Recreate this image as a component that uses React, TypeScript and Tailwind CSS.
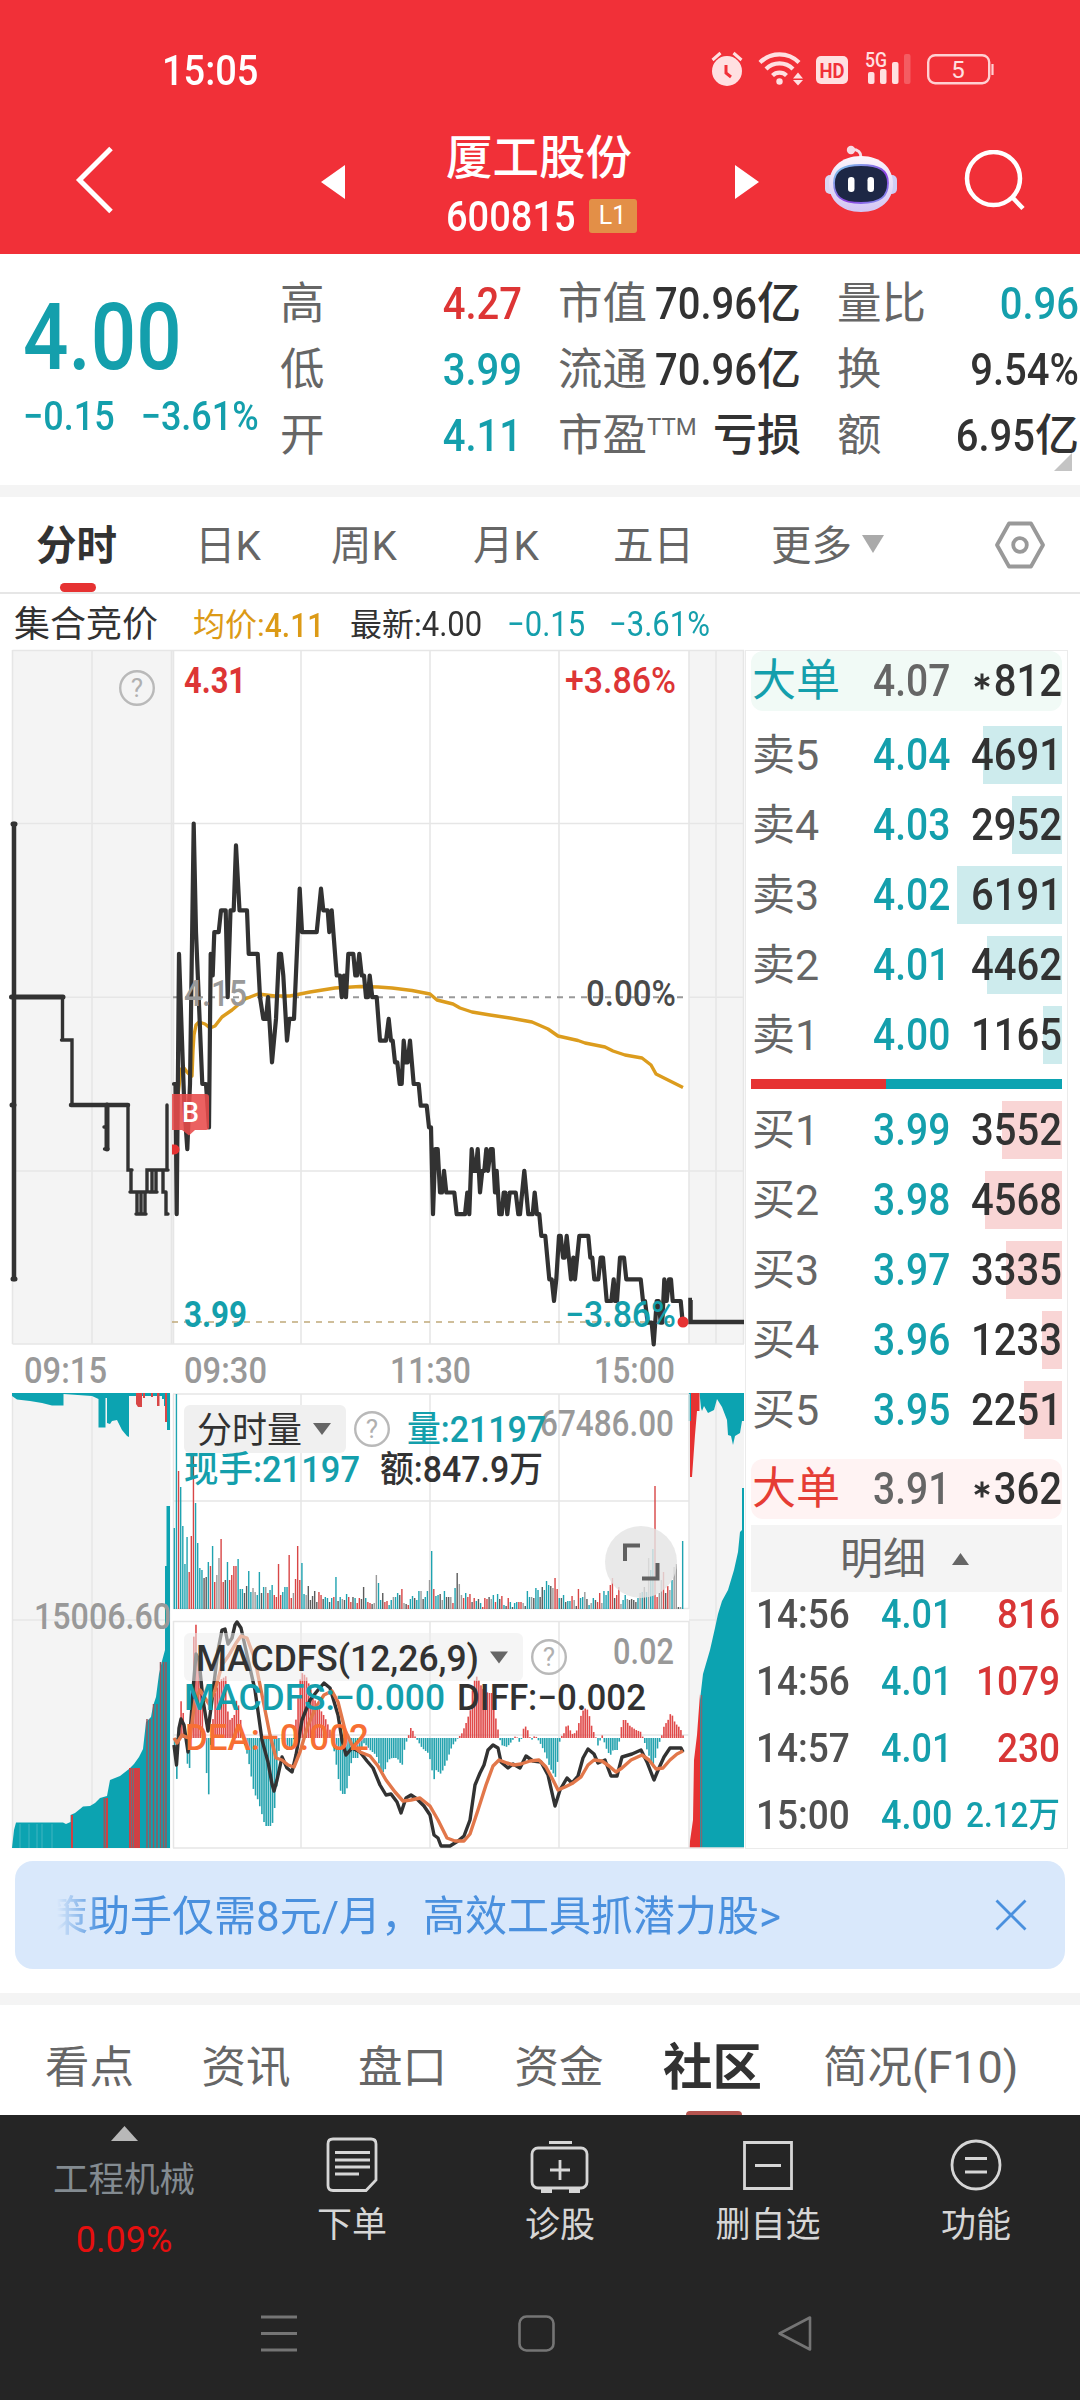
import React from 'react';
import clsx from 'clsx';

const UP = '#e63232';
const DOWN = '#0ca3b1';
const INK = '#323232';
const GRID = '#e6e6e6';

type Point = [number, number];

/* ---------- chart data ---------- */

// x position, offset from the previous close in cents
const priceLine: Point[] = [
  [174, -4], [175.5, -4], [176.7, -10], [179, 2], [182, -2], [184.3, -5], [187.3, -7], [190, -4], [193.7, 8], [196, 3],
  [202.3, -4], [206, -4], [209, -6], [210.7, 2], [212.7, 1], [214.3, 3], [218.7, 3], [221, 4], [225.7, 4],
  [227.7, 0], [230.5, 4], [233.7, 4], [236, 7], [239.5, 4], [247, 4], [248.7, 2], [257.7, 2], [260, 0],
  [263.3, -1], [266, -1], [268, 0], [272, -3], [276, -1], [279, 2], [281, 2], [283.3, 1], [287, -2],
  [289.3, -1], [294, -1], [299.7, 5], [302, 3], [316.7, 3], [321, 5], [323.3, 4], [327.7, 4], [329.3, 3],
  [331.7, 4], [336.7, 1], [340, 1], [341.7, 0], [344, 1], [346, 0], [348.3, 2], [353.3, 2], [355.3, 1],
  [357, 1], [359.3, 2], [361.7, 1], [364, 1], [366, 0], [368, 0], [369.7, 1], [372.3, 0], [376.7, 0],
  [380, -2], [386, -2], [388.7, -1], [391, -2], [392.7, -2], [395, -3], [397.3, -3], [399.7, -4],
  [401.7, -4], [403.7, -2], [406, -3], [407.7, -3], [410, -2], [413.7, -4], [418.7, -4], [420.7, -5],
  [426.7, -5], [429, -6], [431, -6], [433, -10], [435.3, -7], [437.7, -7], [440, -9], [442, -9], [444, -8],
  [446.3, -9], [454.3, -9], [456.7, -10], [465, -10], [467.3, -9], [469.3, -10], [471.7, -7], [474, -8],
  [475.7, -8], [477.7, -7], [480, -9], [482.3, -8], [484.3, -8], [486.3, -7], [488, -8], [490.7, -7],
  [492.7, -7], [495, -9], [496.7, -8], [499.3, -10], [501.7, -10], [503.7, -9], [505.3, -9], [507.3, -10],
  [509.7, -9], [515.7, -9], [518.3, -10], [520, -10], [524.3, -8], [528.3, -10], [532.7, -10], [534.7, -9],
  [537, -10], [539.3, -10], [541.3, -11], [545.3, -11], [549.3, -13], [551.7, -13], [554, -14], [556.3, -13],
  [559, -11], [560.7, -11], [563, -12], [564.7, -12], [566.7, -11], [571, -13], [573.3, -12], [575, -13],
  [579.3, -11], [588.3, -11], [590.3, -12], [592.3, -12], [594.3, -13], [598.3, -13], [600.7, -12],
  [603, -12], [606.7, -14], [611.3, -14], [613.7, -13], [615, -14], [617, -14], [620, -12], [624, -12],
  [626.3, -13], [640.7, -13], [643, -14], [645, -14], [647.7, -15], [651.7, -15], [653.7, -16],
  [656.7, -14], [658.7, -14], [660.7, -15], [662.3, -15], [664.3, -13], [666.7, -14], [669, -13], [671, -13],
  [672.7, -14], [680.7, -14], [682.7, -15],
];

const avgLine: Point[] = [
  [178, 1095], [181, 1069], [184, 1068], [187, 1072], [190, 1075], [192, 1076], [193, 1050], [194, 1035], [196, 1025], [199, 1022],
  [205, 1024], [210, 1028], [215, 1026], [222, 1017], [232, 1010], [245, 999], [258, 994], [275, 996],
  [290, 996], [310, 992], [335, 988], [360, 986.5], [378, 987], [392, 988], [412, 990.5], [430, 994],
  [437, 1000], [453, 1004], [460, 1008], [472, 1012], [490, 1015], [510, 1018], [532, 1022], [548, 1029],
  [558, 1036], [578, 1040.5], [585, 1043], [605, 1047], [613, 1051], [625, 1055], [642, 1058], [651, 1065],
  [656, 1074], [668, 1080], [676, 1084], [683, 1087.5],
];

// bar height + colour: r rise, t fall, g/k flat
const volumes = (
  '81t 215t 138r 122t 83t 45t 72t 37r 73r 168r 106t 66t 41t 39t 31k 32k 47t 43r 63t 27r 34g 51g 70r 27r 29k 47t 29r 34r 43r 43r 50t ' +
  '20t 20t 16k 23k 38t 17t 21g 17g 14t 37t 16k 22t 22g 16r 19t 24t 14r 12r 45r 14r 17t 22t 22t 54r 11r 16g 30r 63r 29r 46t 15t 14g ' +
  '23k 9k 13k 18k 7k 17r 14r 10k 12t 11t 7k 11t 12r 32t 8k 12t 10g 9k 15t 12r 7r 12k 11t 6r 11r 10k 22k 11t 7r 6r 5k 6g 34g 26t ' +
  '9t 16k 7r 8r 4t 9t 12g 12t 16t 14k 20r 6g 5k 4r 10t 13t 11k 9t 18t 18g 10k 12t 18t 29g 58t 20r 13t 14t 15k 9g 18t 12k 12k 12g ' +
  '6r 21t 36k 25g 14g 11r 16t 12r 15r 7k 11r 8t 10k 6t 2r 11r 10r 12k 10g 14t 7r 15t 10k 13r 4t 3k 11r 7t 2k 6t 7t 7r 7r 6g 3k ' +
  '18t 12t 12g 11k 21t 19t 12k 22k 19t 28t 24t 23k 21g 31r 20r 11t 11k 14t 7k 8t 8t 13r 9g 3k 20r 11t 12t 17g 10k 4t 6g 11t 9k 7r ' +
  '16r 6g 18t 14t 18t 24r 31r 11k 14r 22r 5g 9t 14t 10g 9k 10k 9k 7k 11t 16g 17t 22k 17t 51g 39t 60t 123r 12r 16g 29g 37r 16k 23r ' +
  '19g 29t 42g 45g 2k 2g 68t'
).split(' ');

const barColors: Record<string, string> = { r: '#d84646', t: '#1fa3b0', g: '#9a9a9a', k: '#5c5c5c' };

const macdBars: Point[] = [
  [174, 0], [176.5, -46], [179, 10], [181, 37], [184, 20], [187, -25], [189.5, -30], [191, 0], [193.5, 100], [196, 114],
  [198, 80], [201, 50], [204, 10], [206, -30], [208.7, -57], [210.5, -10], [212, 8], [215, 45], [220, 58],
  [226, 62], [228, 22], [230, 18], [234, 22], [237, 42], [240, 22], [243, 0], [248, -20], [254, -55],
  [258, -62], [265, -88], [272, -88], [276, -60], [279, -10], [281, 0], [282.5, 9], [284, 0], [286, -12],
  [291, -12], [294, 0], [297, 30], [299, 55], [302, 65], [306, 62], [312, 45], [318, 30], [322, 26],
  [326, 18], [330, 8], [332, 0], [336, -25], [340, -52], [344, -58], [347, -50], [352, -20], [358, -20],
  [364, -5], [370, -12], [376, -17], [381, -32], [384, -35], [388, -22], [392, -20], [397, -20], [402, -28],
  [405, -7], [408, 0], [410, 10], [412, 10], [414, 3], [416, 0], [422, -10], [428, -15], [431, -25],
  [433.5, -44], [436, -32], [441, -36], [446, -25], [452, -8], [458, 0], [462, 5], [466, 15], [471, 30],
  [473, 55], [477, 62], [482, 50], [488, 45], [492, 45], [496, 18], [499, 3], [501, -7], [507, -9],
  [512, -3], [516, 3], [519, -4], [522, 0], [524, 13], [527, 10], [531, -3], [535, 3], [540, -5],
  [545, -15], [550, -30], [556, -40], [558, -18], [560, 0], [564, 5], [567, 15], [570, 8], [573, 3],
  [577, 8], [580, 20], [584, 30], [588, 28], [592, 10], [596, 0], [598, -8], [602, 3], [606, -10],
  [610, -18], [613, -12], [618, -12], [621, 10], [624, 20], [630, 12], [636, 8], [641, 6], [643, 0],
  [648, -15], [653, -30], [658, -8], [661, 0], [664, 12], [668, 18], [671, 26], [675, 15], [680, 10], [684, 0],
];

const diffLine: Point[] = [
  [174, 1745], [176.5, 1765], [179, 1728], [181, 1719], [184, 1725], [188, 1752], [190, 1735], [193, 1690],
  [196, 1654], [199, 1660], [203, 1700], [208, 1731], [212, 1700], [218, 1650], [222, 1630], [225, 1629],
  [228, 1644], [232, 1638], [235, 1625], [237, 1622], [241, 1628], [247, 1655], [255, 1690], [262, 1740], [268, 1762],
  [272, 1784], [274, 1791], [277, 1780], [282, 1757], [287, 1768], [292, 1772], [296, 1755], [302, 1720], [310, 1700],
  [318, 1690], [324, 1683], [330, 1688], [338, 1715], [342, 1740], [346, 1755], [352, 1748], [360, 1752],
  [367, 1761], [373, 1768], [380, 1785], [386, 1795], [391, 1794], [397, 1802], [401, 1813], [406, 1798],
  [411, 1795], [417, 1799], [424, 1806], [430, 1815], [434, 1835], [438, 1838], [441, 1846], [450, 1846],
  [458, 1841], [464, 1836], [470, 1820], [475, 1785], [480, 1773], [484, 1765], [488, 1750], [493, 1745],
  [498, 1748], [501, 1762], [508, 1768], [513, 1764], [520, 1768], [526, 1756], [533, 1761], [541, 1762],
  [548, 1775], [555, 1806], [560, 1790], [567, 1778], [572, 1783], [578, 1776], [583, 1758], [588, 1749],
  [594, 1754], [598, 1763], [605, 1760], [611, 1776], [617, 1776], [622, 1757], [632, 1754], [641, 1750],
  [647, 1762], [654, 1780], [659, 1768], [664, 1757], [670, 1748], [681, 1748], [683, 1752],
];

const deaLine: Point[] = [
  [174, 1738], [177, 1743], [182, 1735], [186, 1737], [190, 1738], [195, 1700], [200, 1690], [205, 1698],
  [209, 1704], [215, 1690], [222, 1665], [229, 1655], [236, 1643], [241, 1636], [247, 1638], [255, 1660],
  [263, 1700], [270, 1735], [276, 1758], [282, 1760], [288, 1765], [294, 1767], [300, 1752], [308, 1725],
  [316, 1707], [324, 1695], [332, 1691], [338, 1702], [345, 1730], [352, 1745], [360, 1752], [370, 1756],
  [378, 1766], [386, 1780], [395, 1792], [403, 1801], [411, 1800], [420, 1798], [430, 1806], [438, 1820],
  [447, 1838], [455, 1841], [464, 1841], [470, 1834], [478, 1810], [486, 1785], [493, 1766], [499, 1760],
  [507, 1763], [514, 1765], [521, 1764], [530, 1761], [539, 1760], [546, 1767], [553, 1780], [558, 1790],
  [565, 1787], [573, 1783], [581, 1777], [588, 1765], [594, 1760], [602, 1761], [609, 1766], [616, 1772],
  [622, 1768], [631, 1760], [642, 1755], [649, 1760], [656, 1769], [663, 1768], [670, 1760], [677, 1754],
  [683, 1751],
];

const valueAt = (points: Point[], x: number) => {
  const i = points.findIndex((p) => p[0] >= x);
  if (i <= 0) return 0;
  const [x0, y0] = points[i - 1];
  const [x1, y1] = points[i];
  return y0 + ((y1 - y0) * (x - x0)) / (x1 - x0);
};

const toPoints = (points: Point[]) => points.map((p) => p.join(',')).join(' ');
const priceY = (cents: number) => 997.2 - cents * 21.7;

/* ---------- small parts ---------- */

// DIN-like figures: Roboto stretched a little upwards
function Num({ children, className }: { children: React.ReactNode; className?: string }) {
  return <span className={clsx('inline-block scale-y-[1.12] font-medium', className)}>{children}</span>;
}

interface LabelProps {
  x: number;
  y: number;
  w: number;
  size?: number;
  fill?: string;
  weight?: number;
  children: string;
}

function Label({ x, y, w, size = 36, fill = INK, weight = 500, children }: LabelProps) {
  return (
    <text x={x} y={y} textLength={w} lengthAdjust="spacingAndGlyphs" fontSize={size} fill={fill} fontWeight={weight}>
      {children}
    </text>
  );
}

function Help({ x, y }: { x: number; y: number }) {
  return (
    <g>
      <circle cx={x} cy={y} r="16.8" fill="none" stroke="#b9b9b9" strokeWidth="2.4" />
      <text x={x} y={y + 9} textAnchor="middle" fontSize="26" fill="#b0b0b0">?</text>
    </g>
  );
}

/* ---------- header ---------- */

function StatusIcons() {
  return (
    <svg width="290" height="48" viewBox="708 46 290 48" fill="#ffe0e1">
      <circle cx="727" cy="71" r="15" />
      <path d="M712.5 60l8-7M741.5 60l-8-7" stroke="#ffe0e1" strokeWidth="3" />
      <path d="M726 65v8l5 4" fill="none" stroke="#f13038" strokeWidth="3" />
      <g fill="none" stroke="#ffe0e1" strokeWidth="4.2">
        <path d="M760 62.5a27.5 27.5 0 0 1 39 0" />
        <path d="M766 69a19 19 0 0 1 27 0" />
        <path d="M772.5 75.5a10 10 0 0 1 14 0" />
      </g>
      <circle cx="779.5" cy="81.5" r="3.2" />
      <path d="M793 78.5l5-6 5 6zM793 80l5 5.5 5-5.5z" />
      <rect x="816" y="56" width="32" height="28" rx="5" />
      <text x="832" y="77.5" textAnchor="middle" fontSize="21" fontWeight="700" fill="#f13038" textLength="25" lengthAdjust="spacingAndGlyphs">HD</text>
      <text x="865" y="67" fontSize="20" fontWeight="500" textLength="22" lengthAdjust="spacingAndGlyphs">5G</text>
      <rect x="868" y="72" width="6.5" height="12" rx="2" />
      <rect x="880" y="69" width="6.5" height="15" rx="2" />
      <rect x="892" y="62" width="6.5" height="22" rx="2" />
      <rect x="904" y="54" width="6.5" height="30" rx="2" opacity=".25" />
      <rect x="928.2" y="55.2" width="61" height="28" rx="7" fill="none" stroke="#ffd0d2" strokeWidth="2.4" />
      <path d="M992.5 64v11" stroke="#ffd0d2" strokeWidth="2.2" />
      <text x="958" y="78" textAnchor="middle" fontSize="24">5</text>
    </svg>
  );
}

function Robot() {
  return (
    <svg width="74" height="70" viewBox="824 144 74 70">
      <defs>
        <linearGradient id="shell" x1="0" y1="0" x2="0" y2="1">
          <stop offset="0" stopColor="#fdf6fb" />
          <stop offset="1" stopColor="#d2c5f4" />
        </linearGradient>
        <linearGradient id="rim" x1="0" y1="0" x2="1" y2="1">
          <stop offset="0" stopColor="#7fd4ee" />
          <stop offset=".6" stopColor="#8d3fe0" />
          <stop offset="1" stopColor="#7fa0f0" />
        </linearGradient>
      </defs>
      <path d="M852 149.500c6 0 9 2 9 8" fill="none" stroke="#f6dfe8" strokeWidth="3" />
      <circle cx="851" cy="150" r="4.2" fill="#f6dbe4" />
      <rect x="825" y="175" width="12" height="19" rx="5" fill="#dbd6f2" />
      <rect x="885" y="175" width="12" height="19" rx="5" fill="#cfcdf5" />
      <path d="M861 156c20 0 32 12 32 28s-12 28-32 28-32-12-32-28 12-28 32-28z" fill="url(#shell)" />
      <path d="M861 165c18 0 27 5 27 18s-7 20-27 20-27-7-27-20 9-18 27-18z" fill="#1d2745" stroke="url(#rim)" strokeWidth="1.8" />
      <rect x="848" y="177" width="6.5" height="15" rx="3.2" fill="#fff" />
      <rect x="867.5" y="177" width="6.5" height="15" rx="3.2" fill="#fff" />
    </svg>
  );
}

function Header() {
  return (
    <header className="h-[254px] bg-[#f13038] text-white">
      <div className="flex h-[124px] items-start justify-between pl-[162px] pr-[82px] pt-[46px]">
        <span className="flex h-12 items-center text-[38px]">
          <Num className="scale-y-[1.08]">15:05</Num>
        </span>
        <StatusIcons />
      </div>
      <div className="flex h-[116px] items-center">
        <svg className="-mt-1 ml-[74px]" width="42" height="68" viewBox="74 148 42 68" fill="none" stroke="#fff" strokeWidth="5">
          <path d="M111 150.5L79.500 182l31.5 31.5" />
        </svg>
        <svg className="ml-[205px]" width="24" height="34" fill="#fff">
          <path d="M24 0v34L0 17z" />
        </svg>
        <div className="ml-[85px] w-[220px] pl-4 pt-2">
          <div className="text-[46.5px] font-medium leading-[60px]">厦工股份</div>
          <div className="-mt-px flex h-[58px] items-center gap-[13px] text-[38px]">
            <Num className="relative top-px">600815</Num>
            <span className="flex h-[34px] w-12 items-center justify-center rounded-[3px] bg-[#e38f47] text-[25px]">L1</span>
          </div>
        </div>
        <svg className="ml-[85px]" width="24" height="34" fill="#fff">
          <path d="M0 0v34l24-17z" />
        </svg>
        <div className="-mt-1.5 ml-[65px]">
          <Robot />
        </div>
        <svg className="ml-[65px]" width="64" height="64" viewBox="0 0 64 64" fill="none" stroke="#fff" strokeWidth="4.5">
          <circle cx="30.5" cy="28.5" r="26.5" />
          <path d="M49.5 47.5L60 58.5" />
        </svg>
      </div>
    </header>
  );
}

/* ---------- quote ---------- */

interface Quote {
  label: string;
  sup?: string;
  value: string;
  unit?: string;
  tone: string;
}

const quotes: Quote[] = [
  { label: '高', value: '4.27', tone: 'text-[#dd3535]' },
  { label: '市值', value: '70.96', unit: '亿', tone: 'text-[#323232]' },
  { label: '量比', value: '0.96', tone: 'text-[#149fac]' },
  { label: '低', value: '3.99', tone: 'text-[#149fac]' },
  { label: '流通', value: '70.96', unit: '亿', tone: 'text-[#323232]' },
  { label: '换', value: '9.54%', tone: 'text-[#323232]' },
  { label: '开', value: '4.11', tone: 'text-[#149fac]' },
  { label: '市盈', sup: 'TTM', value: '', unit: '亏损', tone: 'text-[#323232]' },
  { label: '额', value: '6.95', unit: '亿', tone: 'text-[#323232]' },
];

function QuotePanel() {
  return (
    <section className="relative flex h-[231px]">
      <div className="w-[280px] pl-[23px] text-[#149fac]">
        <div className="mt-[44px] flex h-20 items-center text-[80px]">
          <Num className="scale-y-[1.15]">4.00</Num>
        </div>
        <div className="mt-[19px] flex h-10 items-center gap-[26px] whitespace-nowrap text-[36px]">
          <Num className="scale-y-[1.09] font-medium">−0.15</Num>
          <Num className="scale-y-[1.09] font-medium">−3.61%</Num>
        </div>
      </div>
      <div className="mt-[17px] grid h-[198px] w-[800px] grid-cols-[242px_243px_242px] grid-rows-3 gap-x-9">
        {quotes.map((q) => (
          <div key={q.label} className="flex items-center justify-between whitespace-nowrap leading-[60px]">
            <span className="flex text-[44.5px] text-[#666]">
              {q.label}
              {q.sup && <sup className="top-0 text-[24px] leading-[42px]">{q.sup}</sup>}
            </span>
            <span className={clsx('flex items-center text-[40px]', q.tone)}>
              {q.value && <Num>{q.value}</Num>}
              {q.unit && <span className="text-[44px] font-medium">{q.unit}</span>}
            </span>
          </div>
        ))}
      </div>
      <svg className="absolute right-2 top-[199px]" width="18" height="18" fill="#c4c4c4">
        <path d="M18 0v18H0z" />
      </svg>
    </section>
  );
}

function PeriodTabs() {
  return (
    <nav className="flex h-[97px] items-center border-b-2 border-[#e6e6e6] text-[40.5px] leading-[60px] text-[#666]">
      <div className="relative ml-[36px] flex h-full w-[84px] items-center pt-[3px] font-bold text-[#323232]">
        分时
        <span className="absolute bottom-0 left-6 h-[9px] w-9 rounded-full bg-[#e63232]" />
      </div>
      <div className="ml-[75px] w-[136px] pt-[3px]">日K</div>
      <div className="w-[142px] pt-[3px]">周K</div>
      <div className="w-[140px] pt-[3px]">月K</div>
      <div className="w-[158px] pt-[3px]">五日</div>
      <div className="flex items-center gap-2.5 pt-[3px]">
        更多
        <svg className="-mt-1" width="22" height="18" fill="#aaa">
          <path d="M0 0h22L11 18z" />
        </svg>
      </div>
      <svg className="ml-[110px]" width="52" height="50" viewBox="0 0 52 50" fill="none" stroke="#999" strokeWidth="3.8" strokeLinejoin="round">
        <path d="M15 3.5h22L49 25 37 46.5H15L3 25z" />
        <circle cx="26" cy="25" r="6.8" />
      </svg>
    </nav>
  );
}

function InfoRow() {
  return (
    <div className="flex h-14 items-center whitespace-nowrap pl-[14px] pt-1.5 text-[32px] text-[#323232]">
      <span className="w-[179px] text-[36px]">集合竞价</span>
      <span className="flex w-[157px] items-center text-[#dc9a16]">
        均价:<Num className="text-[30px]">4.11</Num>
      </span>
      <span className="flex w-[157px] items-center">
        最新:<Num className="text-[31px] font-normal">4.00</Num>
      </span>
      <Num className="w-[102px] text-[31px] font-normal text-[#149fac]">−0.15</Num>
      <Num className="text-[31px] font-normal text-[#149fac]">−3.61%</Num>
    </div>
  );
}

/* ---------- charts ---------- */

function PriceChart() {
  return (
    <g>
      <rect x="12.5" y="650" width="161" height="694" fill="#f4f4f4" />
      <rect x="689" y="650" width="55" height="694" fill="#f4f4f4" />
      <g stroke={GRID} strokeWidth="1.6">
        <path d="M12.5 650.5H744M12.5 823.5H744M12.5 997.2H173M689 997.2H744M12.5 1171H744M12.5 1344H744" />
        <path d="M12.5 650V1344M92 650V1344M171.5 650V1344M173.5 650V1344M301 650V1344M430 650V1344M559 650V1344M689 650V1344M716 650V1344M743.5 650V1344" />
      </g>
      <Help x={137} y={688} />
      <path d="M173 997.2H683" stroke="#999" strokeWidth="2" strokeDasharray="6 6" />
      <path d="M172 1322H676" stroke="#c0a97a" strokeWidth="1.6" strokeDasharray="6 6" />

      <polyline points={toPoints(avgLine)} fill="none" stroke="#dc9c1d" strokeWidth="3.4" strokeLinejoin="round" />
      <polyline
        points={toPoints(priceLine.map(([x, c]) => [x, priceY(c)]))}
        fill="none"
        stroke={INK}
        strokeWidth="4.2"
        strokeLinejoin="round"
        strokeLinecap="round"
      />

      {/* opening auction */}
      <g fill="none" stroke={INK} strokeWidth="3.4" strokeLinecap="round">
        <path d="M14 824V1279" strokeWidth="4.5" />
        <path d="M11.5 997H63M13 824H15M13 1279H15" strokeWidth="5" />
        <path d="M62.5 997V1040H72V1105M61.5 1040H72" />
        <path d="M71 1105H128" strokeWidth="4.5" />
        <path d="M12 1105H14M107 1105V1149" strokeWidth="5" />
        <path d="M104 1127H107M104.5 1149H108M128 1105V1170H132M131 1170V1192M130 1192H146M137 1192V1214M141 1192V1214M145 1192V1214M136 1214H146M147 1192V1170H168M152 1170V1192M156 1170V1192M149 1192H157M163 1170V1192H166M166 1192V1214H168M167 1170V1105" />
      </g>
      {/* closing auction */}
      <path d="M692 1300H690.5V1322H744" fill="none" stroke={INK} strokeWidth="4.5" />

      <circle cx="683" cy="1322" r="5.5" fill={UP} />
      <path d="M172 1144.5h2.5a5 5 0 0 1 0 10H172z" fill={UP} />
      <path d="M172 1094h34a3 3 0 0 1 3 3v30a3 3 0 0 1-3 3h-11l-6 5.5-7-5.5h-10z" fill="#e84b4b" opacity=".88" />
      <Label x={182} y={1122} w={17} size={28} fill="#fff">B</Label>

      <Label x={184} y={693} w={62} fill="#dd3535" weight={700}>4.31</Label>
      <Label x={565} y={693} w={111} fill="#dd3535">+3.86%</Label>
      <Label x={184} y={1006} w={63} fill="#999">4.15</Label>
      <Label x={586} y={1006} w={90} fill="#4a4a4a">0.00%</Label>
      <Label x={184} y={1327} w={63} fill="#149fac" weight={700}>3.99</Label>
      <Label x={565} y={1327} w={111} fill="#149fac">−3.86%</Label>

      <Label x={24} y={1383} w={83} fill="#999">09:15</Label>
      <Label x={184} y={1383} w={83} fill="#999">09:30</Label>
      <Label x={390} y={1383} w={81} fill="#999">11:30</Label>
      <Label x={594} y={1383} w={81} fill="#999">15:00</Label>
    </g>
  );
}

const redStripes = [72, 104.5, 107, 130, 132.5, 135, 137, 139, 147, 150, 153.5, 157, 160.5, 163.5, 166];
const lightStripes = [20, 29, 37, 42, 52];

const stripeTop = (x: number) => {
  if (x > 160) return 1662;
  if (x > 152) return 1704;
  if (x > 145) return 1719;
  if (x > 128) return 1768;
  return x > 100 ? 1798 : 1815;
};

function AuctionVolume() {
  return (
    <g>
      <rect x="12.5" y="1393.5" width="158" height="455" fill="#f4f4f4" />
      <rect x="689" y="1393.5" width="55" height="455" fill="#f4f4f4" />
      <path d="M12.5 1393V1848M92 1393V1848M716 1393V1848M12.5 1620H170M689 1620H744" stroke={GRID} strokeWidth="1.5" />

      <path
        fill={DOWN}
        d="M12 1393H170V1430H167V1406H164V1399H162V1396H129V1437L127 1436L122 1430L117 1420L112 1421L110 1424L107 1423V1398H105.5V1427.5H98.5V1399L92 1396L63.5 1394V1405.5H52L42 1403L30 1401L17 1399.5L12 1396z"
      />
      <path fill="#d84646" d="M136 1393h6v14h-4l-2-3zM157 1393h2.5v13H157zM165 1393h2v29h-2zM143 1393h2v5h-2zM151 1393h2v4h-2z" />
      <path
        fill={DOWN}
        d="M12 1848L14 1830L16 1822.5H63L66 1824L70.5 1822V1815L75 1813L80 1809L83 1806.5L90 1806L95 1803L100 1798L107 1796L110 1780L120 1776L129 1769L134 1764L139 1757L143 1749L146 1722L151 1717L153 1706L156 1697L159 1674L162 1661L165 1650V1566H166.5V1506H170V1848z"
      />
      {lightStripes.map((x) => (
        <path key={x} d={`M${x} 1824V1848`} stroke="#4fb9c4" strokeWidth=".8" />
      ))}
      {redStripes.map((x) => (
        <path
          key={x}
          d={`M${x} ${stripeTop(x)}V1848`}
          stroke={x < 141 && x !== 104.5 ? '#cf4044' : '#99565c'}
          strokeWidth={x < 141 ? 2 : 1.5}
        />
      ))}

      <path fill={DOWN} d="M688.5 1393H691V1421H688.5zM699.5 1393H744V1421H742L740 1433L735 1436L733 1445L731 1436L728 1435L727 1420L722 1407L717 1399L714 1410L708 1413L704 1406L702 1411L701 1408z" />
      <path fill={UP} d="M691 1393H699.5V1411H697L695 1435L693 1463L692 1477H690V1421H691z" />
      <path fill={DOWN} d="M700 1848V1700L703 1674L710 1650L715 1628L718 1614L722 1601L728 1590L734 1570L738 1552L740 1532L742 1530V1488H744V1848z" />
      <path fill={UP} d="M689 1848L693 1820L694 1760L697 1735L700 1694V1848z" />
      <path d="M701.5 1695V1848" stroke="#7e6a72" strokeWidth="1.5" />
      <Label x={34} y={1629} w={137} fill="#999">15006.60</Label>
    </g>
  );
}

function VolumeChart() {
  return (
    <g>
      <path
        d="M173 1394H689M173 1501H689M173 1608.5H689M173.5 1394V1609M301 1394V1609M430 1394V1609M559 1394V1609M689 1394V1609"
        fill="none"
        stroke={GRID}
        strokeWidth="1.5"
      />
      {volumes.map((v, i) => {
        const h = parseInt(v, 10);
        return <rect key={i} x={173.6 + i * 2.127} y={1609 - h} width="1.4" height={h} fill={barColors[v.slice(-1)]} />;
      })}
      <rect x="184" y="1405" width="162" height="48" rx="6" fill="#f0f0f0" />
      <Label x={197} y={1443} w={105} weight={400}>分时量</Label>
      <path d="M313 1423h18l-9 12z" fill="#666" />
      <Help x={372} y={1429} />
      <Label x={540} y={1436} w={134} fill="#999">67486.00</Label>
      <Label x={407} y={1442} w={139} fill="#149fac">量:21197</Label>
      <Label x={184} y={1482} w={176} fill="#149fac">现手:21197</Label>
      <Label x={380} y={1482} w={163}>额:847.9万</Label>
      <circle cx="641" cy="1562" r="36" fill="#e4e4e4" opacity=".82" />
      <path d="M625 1561V1545.5H640M657.5 1563V1578.5H642" fill="none" stroke="#606060" strokeWidth="4" />
    </g>
  );
}

function MacdChart() {
  return (
    <g>
      <path
        d="M173 1621.5H689M173 1735H689M173 1848H744M173.5 1621V1848M301 1621V1848M430 1621V1848M559 1621V1848M689 1621V1848"
        fill="none"
        stroke={GRID}
        strokeWidth="1.5"
      />
      {volumes.map((_, i) => {
        const x = 174.6 + i * 2.127;
        const h = valueAt(macdBars, x);
        return <rect key={i} x={x - 0.7} y={h > 0 ? 1738 - h : 1738} width="1.6" height={Math.abs(h)} fill={h > 0 ? '#e04a4a' : '#25a3af'} />;
      })}
      <polyline points={toPoints(diffLine)} fill="none" stroke={INK} strokeWidth="3.4" strokeLinejoin="round" />
      <polyline points={toPoints(deaLine)} fill="none" stroke="#e2774a" strokeWidth="3.4" strokeLinejoin="round" />
      <rect x="184" y="1633" width="339" height="48" rx="6" fill="#ececec" opacity=".55" />
      <Label x={196} y={1671} w={283}>MACDFS(12,26,9)</Label>
      <path d="M490 1651.5h18l-9 12z" fill="#666" />
      <Help x={549} y={1657} />
      <Label x={613} y={1664} w={61} fill="#999">0.02</Label>
      <Label x={184} y={1710} w={261} fill="#149fac">MACDFS:−0.000</Label>
      <Label x={457} y={1710} w={189}>DIFF:−0.002</Label>
      <Label x={185} y={1750} w={184} fill="#f76f34">DEA:−0.002</Label>
    </g>
  );
}

function Charts() {
  return (
    <svg className="shrink-0" width="745" height="1201" viewBox="0 649 745 1201">
      <PriceChart />
      <AuctionVolume />
      <VolumeChart />
      <MacdChart />
    </svg>
  );
}

/* ---------- order book ---------- */

const sells = [
  { label: '卖5', price: '4.04', volume: '4691', depth: 79 },
  { label: '卖4', price: '4.03', volume: '2952', depth: 50 },
  { label: '卖3', price: '4.02', volume: '6191', depth: 105 },
  { label: '卖2', price: '4.01', volume: '4462', depth: 75 },
  { label: '卖1', price: '4.00', volume: '1165', depth: 19 },
];

const buys = [
  { label: '买1', price: '3.99', volume: '3552', depth: 60 },
  { label: '买2', price: '3.98', volume: '4568', depth: 77 },
  { label: '买3', price: '3.97', volume: '3335', depth: 56 },
  { label: '买4', price: '3.96', volume: '1233', depth: 20 },
  { label: '买5', price: '3.95', volume: '2251', depth: 38 },
];

const trades = [
  { time: '14:56', price: '4.01', volume: '816', tone: 'text-[#d83636]' },
  { time: '14:56', price: '4.01', volume: '1079', tone: 'text-[#d83636]' },
  { time: '14:57', price: '4.01', volume: '230', tone: 'text-[#d83636]' },
  { time: '15:00', price: '4.00', volume: '2.12万', tone: 'text-[#149fac] text-[31.5px]' },
];

function Level({ label, price, volume, depth, side }: (typeof sells)[number] & { side: 'sell' | 'buy' }) {
  return (
    <div className="relative flex h-[70px] items-center text-[39px] text-[#323232]">
      <span
        className={clsx('absolute right-0 top-[6px] h-[58px]', side === 'sell' ? 'bg-[#cdebed]' : 'bg-[#f9d5d5]')}
        style={{ width: depth }}
      />
      <span className="w-[122px] pl-px text-[43px] leading-[60px] text-[#666]">{label}</span>
      <Num className="text-[#149fac]">{price}</Num>
      <Num className="relative ml-auto text-[40px]">{volume}</Num>
    </div>
  );
}

function BigOrder({ price, volume, className }: { price: string; volume: string; className: string }) {
  return (
    <div className={clsx('flex h-[60px] items-center rounded-xl text-[39px]', className)}>
      <span className="w-[122px] pl-px text-[44px] leading-[60px]">大单</span>
      <Num className="text-[#666]">{price}</Num>
      <span className="ml-auto flex items-center text-[40px] text-[#323232]">
        <svg width="16" height="17" viewBox="0 0 16 17" stroke="#323232" strokeWidth="3">
          <path d="M8 .5v16M1 4.5l14 8M15 4.5l-14 8" />
        </svg>
        <Num className="pl-1">{volume}</Num>
      </span>
    </div>
  );
}

function OrderBook() {
  return (
    <aside className="mt-px h-[1199px] w-[323px] border border-[#ebebeb] px-[5px]">
      <BigOrder price="4.07" volume="812" className="h-[58px] bg-[#f1faf6] text-[#149fac]" />
      <div className="mt-[9px]">
        {sells.map((row) => (
          <Level key={row.label} {...row} side="sell" />
        ))}
      </div>
      <div className="mt-[9px] flex h-[10px]">
        <span className="w-[135px] bg-[#e63232]" />
        <span className="flex-1 bg-[#0ca3b1]" />
      </div>
      <div className="mt-[6px]">
        {buys.map((row) => (
          <Level key={row.label} {...row} side="buy" />
        ))}
      </div>
      <BigOrder price="3.91" volume="362" className="mt-[14px] bg-[#fff3f3] text-[#e63d35]" />
      <div className="mt-[6px] flex h-[67px] items-center justify-center gap-[26px] bg-[#f4f4f4] pr-1 text-[43px] leading-[60px] text-[#666]">
        明细
        <svg width="17" height="12" fill="#666">
          <path d="M8.5 0L17 12H0z" />
        </svg>
      </div>
      <div className="mt-[-11px]">
        {trades.map((t, i) => (
          <div key={i} className="flex h-[67px] items-center text-[37px]">
            <Num className="w-[126px] pl-[5px] text-[#505050]">{t.time}</Num>
            <Num className="pl-1 text-[36px] text-[#149fac]">{t.price}</Num>
            <Num className={clsx('ml-auto pr-[2px]', t.tone)}>{t.volume}</Num>
          </div>
        ))}
      </div>
    </aside>
  );
}

/* ---------- bottom ---------- */

function Banner() {
  return (
    <div className="mx-[15px] mt-[11px] flex h-[108px] items-center justify-between rounded-[18px] bg-[#d9e8fb] pl-[42px] pr-[37px] text-[#4a90de]">
      <div className="flex w-[724px] justify-end overflow-hidden whitespace-nowrap pt-1 text-[42px] leading-[60px] [mask-image:linear-gradient(to_right,transparent,black_44px)]">
        策助手仅需8元/月，高效工具抓潜力股&gt;
      </div>
      <svg width="34" height="34" viewBox="0 0 34 34" stroke="#4a90de" strokeWidth="2.8">
        <path d="M2.5 2.5l29 29M31.5 2.500l-29 29" />
      </svg>
    </div>
  );
}

const sections = ['看点', '资讯', '盘口', '资金'];

function SectionTabs() {
  return (
    <nav className="flex h-[110px] items-center whitespace-nowrap pl-[45px] pt-4 text-[44.5px] leading-[60px] text-[#666]">
      {sections.map((s) => (
        <div key={s} className="w-[156.5px]">{s}</div>
      ))}
      <div className="relative -ml-[8px] flex h-full w-[160px] items-center text-[49.5px] font-bold text-[#323232]">
        社区
        <span className="absolute bottom-0 left-[23px] h-1 w-14 rounded-t bg-[#b5544f]" />
      </div>
      <div>
        简况<span className="text-[45px]">(F10)</span>
      </div>
    </nav>
  );
}

function ToolItem({ label, children }: { label: string; children: React.ReactNode }) {
  return (
    <div className="flex w-[208px] flex-col items-center">
      <svg width="62" height="60" viewBox="0 0 62 60" fill="none" stroke="#d6d6d6" strokeWidth="2.8">
        {children}
      </svg>
      <span className="mt-[6px] text-[35px] leading-[50px] text-[#d6d6d6]">{label}</span>
    </div>
  );
}

function Toolbar() {
  return (
    <div className="flex h-[285px] flex-col bg-[#252525]">
      <div className="flex h-[170px]">
        <div className="flex w-[248px] flex-col items-center pt-[11px]">
          <svg width="27" height="15" fill="#b8b8b8">
            <path d="M13.5 0L27 15H0z" />
          </svg>
          <span className="mt-[14px] text-[35.5px] leading-[50px] text-[#838b91]">工程机械</span>
          <span className="mt-[10px] text-[36px] leading-[50px] text-[#e60f0f]">0.09%</span>
        </div>
        <div className="flex pt-[20px]">
          <ToolItem label="下单">
            <path d="M12 4h38q5 0 5 5v36L45 55.5H12q-5 0-5-5V9q0-5 5-5z" />
            <path d="M14 17.5h35M14 25h35M14 32h35M14 39h24" />
          </ToolItem>
          <ToolItem label="诊股">
            <rect x="3" y="13" width="55" height="40" rx="6" />
            <path d="M20 7.5h23M31 25v20M21 35h20" />
            <path d="M12 56h11M40 56h11" strokeWidth="4" />
          </ToolItem>
          <ToolItem label="删自选">
            <path d="M7.5 7.5h47v46h-47zM18 30.5h26" />
          </ToolItem>
          <ToolItem label="功能">
            <circle cx="31" cy="30" r="24" />
            <path d="M20 23.5h22M20 37h22" />
          </ToolItem>
        </div>
      </div>
      <div className="flex items-center gap-[221px] pl-[260px] pt-[30px]">
        <svg width="37" height="37" stroke="#757575" strokeWidth="2.8">
          <path d="M1 2h36M1 18.5h36M1 35h36" />
        </svg>
        <svg width="37" height="37" fill="none" stroke="#757575" strokeWidth="2.6">
          <rect x="1.5" y="1.5" width="34" height="34" rx="7" />
        </svg>
        <svg width="37" height="37" fill="none" stroke="#757575" strokeWidth="2.6" strokeLinejoin="round">
          <path d="M34 2.5v32L3.500 18.5z" />
        </svg>
      </div>
    </div>
  );
}

export default function App() {
  return (
    <div className="h-[2400px] w-[1080px] overflow-hidden bg-white font-['Roboto','Noto_Sans_CJK_SC',sans-serif]">
      <Header />
      <QuotePanel />
      <div className="h-3 bg-[#f4f4f4]" />
      <PeriodTabs />
      <InfoRow />
      <main className="-mt-px flex h-[1201px]">
        <Charts />
        <OrderBook />
      </main>
      <Banner />
      <div className="mt-6 h-3 bg-[#f4f4f4]" />
      <SectionTabs />
      <Toolbar />
    </div>
  );
}
